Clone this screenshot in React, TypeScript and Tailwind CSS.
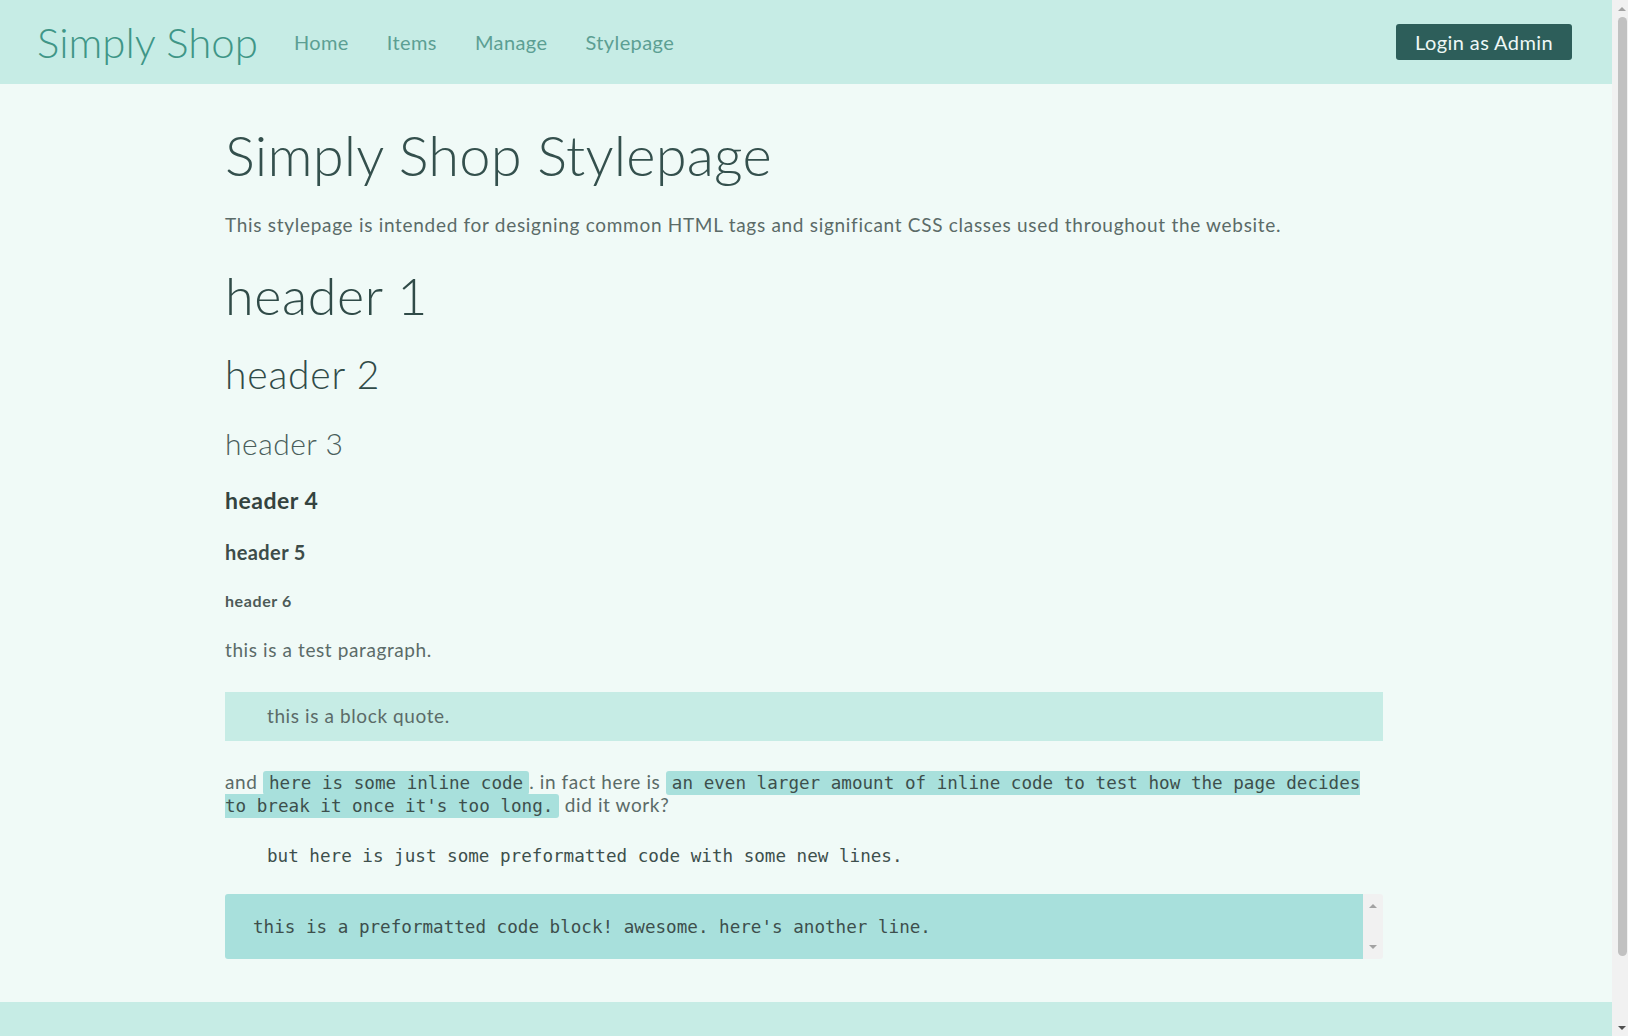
import React from 'react';

const navLinks = ['Home', 'Items', 'Manage', 'Stylepage'];

function Navbar() {
  return (
    <nav className="flex h-[84px] shrink-0 items-center bg-[#c6ece5] pr-10 pl-[37px]">
      <a className="text-[42px] font-light leading-none text-[#3f9687]">Simply Shop</a>
      <ul className="ml-[36px] flex items-center gap-[38px] text-[20px] tracking-[0.4px] text-[#5c9f93]">
        {navLinks.map((link) => (
          <li key={link}>
            <a>{link}</a>
          </li>
        ))}
      </ul>
      <button className="ml-auto h-9 rounded-[3px] bg-[#2d5e5a] px-[19px] text-[20px] leading-none tracking-[0.4px] text-[#eef8f6]">
        Login as Admin
      </button>
    </nav>
  );
}

function InlineCode({ children }: { children: React.ReactNode }) {
  return (
    <code className="rounded-[3px] bg-[#a8e0dc] px-[6px] py-[2px] font-['DejaVu_Sans_Mono',monospace] text-[17.6px] tracking-normal text-[#3d4f4c]">
      {children}
    </code>
  );
}

// the browser's scrollbars, drawn since the page is photographed without them
function Arrow({ up, color }: { up?: boolean; color: string }) {
  return (
    <span
      className={`h-0 w-0 border-x-[4px] border-x-transparent ${up ? 'border-b-[4px]' : 'border-t-[4px]'} ${color}`}
    />
  );
}

function PageScrollbar() {
  return (
    <div className="w-4 shrink-0 overflow-hidden bg-[#f1f1f1]">
      <div className="flex h-full w-[17px] flex-col items-center pl-[3px]">
        <div className="flex h-[17px] items-center justify-center">
          <Arrow up color="border-b-[#a3a3a3]" />
        </div>
        <div className="h-[939px] w-[9px] rounded-full bg-[#c1c1c1]" />
        <div className="mt-auto flex h-[17px] items-center justify-center">
          <Arrow color="border-t-[#505050]" />
        </div>
      </div>
    </div>
  );
}

export default function App() {
  return (
    <div className="flex h-screen overflow-hidden bg-[#f0faf7] font-['Lato',sans-serif] text-[#3a4d4a]">
      <div className="flex min-w-0 flex-1 flex-col">
        <Navbar />

        <main className="mx-auto w-[1158px] shrink-0 -translate-x-[2px] pt-[37px] pb-[43px]">
          <h1 className="text-[56px] leading-[67px] font-light tracking-[0.2px] text-[#34504d]">Simply Shop Stylepage</h1>
          <p className="mt-[23px] text-[19px] leading-[28px] tracking-[0.7px] text-[#5b6b68]">
            This stylepage is intended for designing common HTML tags and significant CSS classes used throughout the
            website.
          </p>

          <h1 className="mt-[27px] text-[52px] leading-[58px] font-light tracking-[0.6px] text-[#304b48]">header 1</h1>
          <h2 className="mt-[29px] text-[39px] leading-[43px] font-light tracking-[0.8px] text-[#304b48]">header 2</h2>
          <h3 className="mt-[30px] text-[30px] leading-[34px] font-light tracking-[0.5px] text-[#4a5e5b]">header 3</h3>
          <h4 className="mt-[27px] text-[23px] leading-[26px] font-bold tracking-[0.5px] text-[#34433f]">header 4</h4>
          <h5 className="mt-[28px] text-[20px] leading-[23px] font-bold tracking-[0.4px] text-[#3d4c49]">header 5</h5>
          <h6 className="mt-[28px] text-[16px] leading-[18px] font-bold tracking-[0.6px] text-[#4d5a58]">header 6</h6>

          <p className="mt-[26px] text-[19px] leading-[28px] tracking-[0.6px] text-[#5b6b68]">this is a test paragraph.</p>

          <blockquote className="mt-[28px] flex h-[49px] items-center bg-[#c6ece5] pl-[42px] text-[19px] tracking-[0.6px] text-[#5b6b68]">
            this is a block quote.
          </blockquote>

          <p className="mt-[30px] text-[19px] leading-[22px] tracking-[0.6px] text-[#5b6b68]">
            and <InlineCode>here is some inline code</InlineCode>. in fact here is{' '}
            <InlineCode>
              an even larger amount of inline code to test how the page decides
              <br />
              to break it once it's too long.
            </InlineCode>{' '}
            did it work?
          </p>

          <pre className="mt-[28px] pl-[42px] font-['DejaVu_Sans_Mono',monospace] text-[17.6px] leading-[22px] text-[#3d4f4c]">
            but here is just some preformatted code with some new lines.
          </pre>

          <div className="mt-[27px] flex h-[65px] overflow-hidden rounded-[3px]">
            <pre className="flex flex-1 items-center bg-[#a8e0dc] px-[28px] font-['DejaVu_Sans_Mono',monospace] text-[17.6px] leading-[22px] text-[#3d4f4c]">
              this is a preformatted code block! awesome. here's another line.
            </pre>
            <div className="flex w-5 flex-col items-center justify-between bg-[#f1f1f1] py-[10px]">
              <Arrow up color="border-b-[#a3a3a3]" />
              <Arrow color="border-t-[#a3a3a3]" />
            </div>
          </div>
        </main>

        <footer className="h-[102px] shrink-0 bg-[#c6ece5]" />
      </div>
      <PageScrollbar />
    </div>
  );
}
